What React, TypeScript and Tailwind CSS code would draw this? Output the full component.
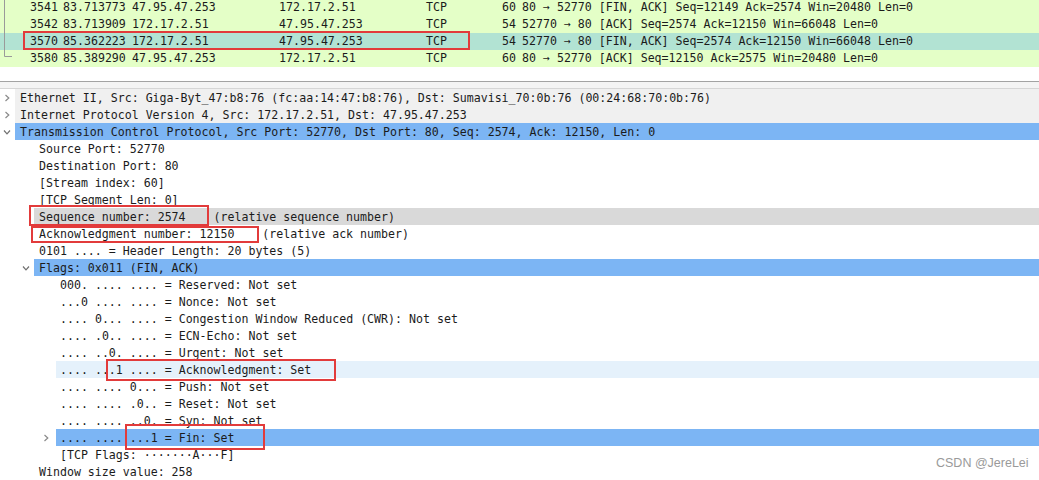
type Packet = {
  no: string;
  time: string;
  src: string;
  dst: string;
  proto: string;
  len: string;
  info: string;
  selected?: boolean;
};

const packets: Packet[] = [
  { no: "3541", time: "83.713773", src: "47.95.47.253", dst: "172.17.2.51", proto: "TCP", len: "60", info: "80 → 52770 [FIN, ACK] Seq=12149 Ack=2574 Win=20480 Len=0" },
  { no: "3542", time: "83.713909", src: "172.17.2.51", dst: "47.95.47.253", proto: "TCP", len: "54", info: "52770 → 80 [ACK] Seq=2574 Ack=12150 Win=66048 Len=0" },
  { no: "3570", time: "85.362223", src: "172.17.2.51", dst: "47.95.47.253", proto: "TCP", len: "54", info: "52770 → 80 [FIN, ACK] Seq=2574 Ack=12150 Win=66048 Len=0", selected: true },
  { no: "3580", time: "85.389290", src: "47.95.47.253", dst: "172.17.2.51", proto: "TCP", len: "60", info: "80 → 52770 [ACK] Seq=12150 Ack=2575 Win=20480 Len=0" },
];

type Node = {
  lv: 0 | 1 | 2;
  text: string;
  arrow?: "right" | "down";
  bg?: string;
};

const tree: Node[] = [
  { lv: 0, arrow: "right", bg: "bg-[#f0f0f0]", text: "Ethernet II, Src: Giga-Byt_47:b8:76 (fc:aa:14:47:b8:76), Dst: Sumavisi_70:0b:76 (00:24:68:70:0b:76)" },
  { lv: 0, arrow: "right", bg: "bg-[#f0f0f0]", text: "Internet Protocol Version 4, Src: 172.17.2.51, Dst: 47.95.47.253" },
  { lv: 0, arrow: "down", bg: "bg-[#7cb5f4]", text: "Transmission Control Protocol, Src Port: 52770, Dst Port: 80, Seq: 2574, Ack: 12150, Len: 0" },
  { lv: 1, text: "Source Port: 52770" },
  { lv: 1, text: "Destination Port: 80" },
  { lv: 1, text: "[Stream index: 60]" },
  { lv: 1, text: "[TCP Segment Len: 0]" },
  { lv: 1, bg: "bg-[#d9d9d9]", text: "Sequence number: 2574    (relative sequence number)" },
  { lv: 1, text: "Acknowledgment number: 12150    (relative ack number)" },
  { lv: 1, text: "0101 .... = Header Length: 20 bytes (5)" },
  { lv: 1, arrow: "down", bg: "bg-[#7cb5f4]", text: "Flags: 0x011 (FIN, ACK)" },
  { lv: 2, text: "000. .... .... = Reserved: Not set" },
  { lv: 2, text: "...0 .... .... = Nonce: Not set" },
  { lv: 2, text: ".... 0... .... = Congestion Window Reduced (CWR): Not set" },
  { lv: 2, text: ".... .0.. .... = ECN-Echo: Not set" },
  { lv: 2, text: ".... ..0. .... = Urgent: Not set" },
  { lv: 2, bg: "bg-[#e5f1fb]", text: ".... ...1 .... = Acknowledgment: Set" },
  { lv: 2, text: ".... .... 0... = Push: Not set" },
  { lv: 2, text: ".... .... .0.. = Reset: Not set" },
  { lv: 2, text: ".... .... ..0. = Syn: Not set" },
  { lv: 2, arrow: "right", bg: "bg-[#7cb5f4]", text: ".... .... ...1 = Fin: Set" },
  { lv: 2, text: "[TCP Flags: ·······A···F]" },
  { lv: 1, text: "Window size value: 258" },
];

// where the highlight starts, and the padding up to the text
const bgStart = ["w-[15px]", "w-[34px]", "w-[56px]"];
const textPad = ["pl-[5px]", "pl-[5px]", "pl-[4px]"];
const arrowPad = ["pl-[3px]", "pl-[22px]", "pl-[42px]"];

function Chevron({ dir }: { dir: "right" | "down" }) {
  return (
    <svg width="8" height="8" viewBox="0 0 8 8" className="shrink-0">
      {dir === "right" ? (
        <path d="M2.5 1 L5.8 4 L2.5 7" fill="none" stroke="#8a8a8a" strokeWidth="1.2" />
      ) : (
        <path d="M1 2.5 L4 5.8 L7 2.5" fill="none" stroke="#707070" strokeWidth="1.2" />
      )}
    </svg>
  );
}

function Box({ className }: { className: string }) {
  return <div className={`absolute border-2 border-[#e23b3b] ${className}`} />;
}

export default function App() {
  return (
    <div
      className="relative w-[1039px] h-[480px] overflow-hidden bg-white text-[11.6px] leading-[17px] text-[#1b1b1b] whitespace-pre"
      style={{ fontFamily: '"DejaVu Sans Mono", "Liberation Mono", monospace' }}
    >
      {/* packet list */}
      <div className="relative -mt-[1px]">
        {packets.map((p) => (
          <div
            key={p.no}
            className={`flex h-[17px] items-center pl-[30px] ${p.selected ? "bg-[#b2e3d3]" : "bg-[#e4ffc7]"}`}
          >
            <span className="w-[33px]">{p.no}</span>
            <span className="w-[69px]">{p.time}</span>
            <span className="w-[147px]">{p.src}</span>
            <span className="w-[147px]">{p.dst}</span>
            <span className="w-[76px]">{p.proto}</span>
            <span className="w-[20px]">{p.len}</span>
            <span>{p.info}</span>
          </div>
        ))}
        <svg className="absolute left-0 top-[1px]" width="14" height="60">
          <path d="M4.5 0 V56.5 H12" fill="none" stroke="#9a9a9a" strokeWidth="1" />
        </svg>
      </div>

      {/* splitter */}
      <div className="h-[14px]" />
      <div className="h-[1px] bg-[#a3a3a3]" />
      <div className="h-[6px] bg-[#f4f4f4]" />
      <div className="h-[1px] bg-[#d6d6d6]" />

      {/* packet details */}
      <div>
        {tree.map((n, i) => (
          <div key={i} className="flex h-[17px] items-center">
            <div className={`flex h-full items-center shrink-0 ${bgStart[n.lv]} ${arrowPad[n.lv]}`}>
              {n.arrow && <Chevron dir={n.arrow} />}
            </div>
            <div className={`flex-1 h-full flex items-center pt-[1px] ${textPad[n.lv]} ${n.bg ?? ""}`}>
              {n.text}
            </div>
          </div>
        ))}
      </div>

      {/* annotations */}
      <Box className="left-[23px] top-[31px] w-[447px] h-[19px]" />
      <Box className="left-[29px] top-[205px] w-[180px] h-[21px]" />
      <Box className="left-[31px] top-[226px] w-[228px] h-[17px]" />
      <Box className="left-[106px] top-[359px] w-[230px] h-[22px]" />
      <Box className="left-[125px] top-[424px] w-[140px] h-[26px]" />

      <div
        className="absolute left-[936px] top-[455px] text-[12.5px] leading-[16px] text-[#9a9a9a]"
        style={{ fontFamily: '"Liberation Sans", Arial, sans-serif' }}
      >
        CSDN @JereLei
      </div>
    </div>
  );
}
